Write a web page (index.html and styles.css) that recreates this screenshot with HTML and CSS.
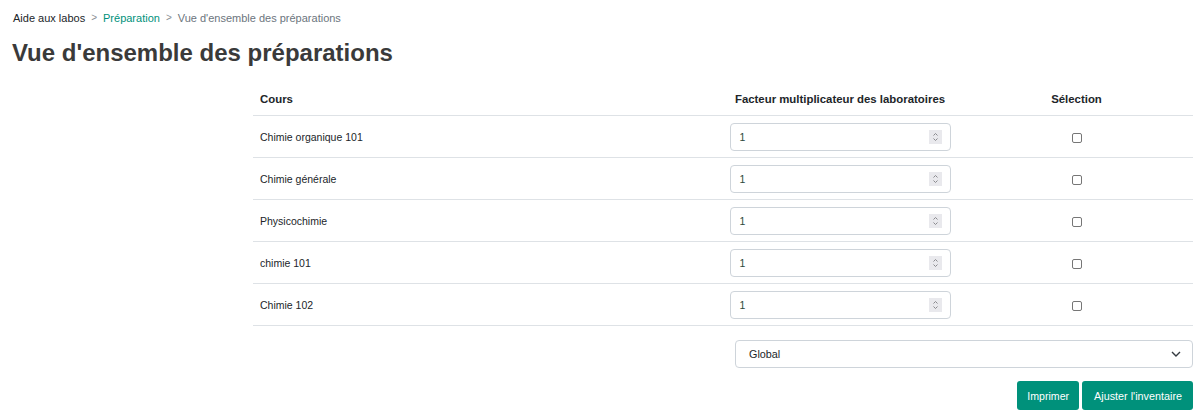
FILE: index.html
```html
<!DOCTYPE html>
<html lang="fr">
<head>
<meta charset="utf-8">
<title>Vue d'ensemble des préparations</title>
<link rel="stylesheet" href="styles.css">
</head>
<body>
<div class="page">
  <nav class="breadcrumb">
    <span class="crumb crumb-root">Aide aux labos</span>
    <span class="sep">&gt;</span>
    <span class="crumb crumb-link">Préparation</span>
    <span class="sep">&gt;</span>
    <span class="crumb crumb-current">Vue d'ensemble des préparations</span>
  </nav>
  <h1 class="title">Vue d'ensemble des préparations</h1>

  <div class="content">
    <table class="prep-table">
      <thead>
        <tr>
          <th class="col-cours">Cours</th>
          <th class="col-factor">Facteur multiplicateur des laboratoires</th>
          <th class="col-select">Sélection</th>
        </tr>
      </thead>
      <tbody>
        <tr>
          <td class="col-cours">Chimie organique 101</td>
          <td class="col-factor"><div class="num-input"><span class="num-value">1</span><svg class="spinner" viewBox="0 0 13 14" width="13" height="14"><rect width="13" height="14" fill="#e9e9ed"/><path d="M4.5 5.5 L6.5 3.5 L8.5 5.5 M4.5 8.5 L6.5 10.5 L8.5 8.5" fill="none" stroke="#8a8a8e" stroke-width="1"/></svg></div></td>
          <td class="col-select"><span class="checkbox"></span></td>
        </tr>
        <tr>
          <td class="col-cours">Chimie générale</td>
          <td class="col-factor"><div class="num-input"><span class="num-value">1</span><svg class="spinner" viewBox="0 0 13 14" width="13" height="14"><rect width="13" height="14" fill="#e9e9ed"/><path d="M4.5 5.5 L6.5 3.5 L8.5 5.5 M4.5 8.5 L6.5 10.5 L8.5 8.5" fill="none" stroke="#8a8a8e" stroke-width="1"/></svg></div></td>
          <td class="col-select"><span class="checkbox"></span></td>
        </tr>
        <tr>
          <td class="col-cours">Physicochimie</td>
          <td class="col-factor"><div class="num-input"><span class="num-value">1</span><svg class="spinner" viewBox="0 0 13 14" width="13" height="14"><rect width="13" height="14" fill="#e9e9ed"/><path d="M4.5 5.5 L6.5 3.5 L8.5 5.5 M4.5 8.5 L6.5 10.5 L8.5 8.5" fill="none" stroke="#8a8a8e" stroke-width="1"/></svg></div></td>
          <td class="col-select"><span class="checkbox"></span></td>
        </tr>
        <tr>
          <td class="col-cours">chimie 101</td>
          <td class="col-factor"><div class="num-input"><span class="num-value">1</span><svg class="spinner" viewBox="0 0 13 14" width="13" height="14"><rect width="13" height="14" fill="#e9e9ed"/><path d="M4.5 5.5 L6.5 3.5 L8.5 5.5 M4.5 8.5 L6.5 10.5 L8.5 8.5" fill="none" stroke="#8a8a8e" stroke-width="1"/></svg></div></td>
          <td class="col-select"><span class="checkbox"></span></td>
        </tr>
        <tr>
          <td class="col-cours">Chimie 102</td>
          <td class="col-factor"><div class="num-input"><span class="num-value">1</span><svg class="spinner" viewBox="0 0 13 14" width="13" height="14"><rect width="13" height="14" fill="#e9e9ed"/><path d="M4.5 5.5 L6.5 3.5 L8.5 5.5 M4.5 8.5 L6.5 10.5 L8.5 8.5" fill="none" stroke="#8a8a8e" stroke-width="1"/></svg></div></td>
          <td class="col-select"><span class="checkbox"></span></td>
        </tr>
      </tbody>
    </table>

    <div class="select-box">
      <span class="select-value">Global</span>
      <svg class="chevron" viewBox="0 0 10 6" width="10" height="6"><path d="M1 1 L5 5 L9 1" fill="none" stroke="#343a40" stroke-width="1.4"/></svg>
    </div>

    <div class="actions">
      <button class="btn">Imprimer</button>
      <button class="btn btn-wide">Ajuster l'inventaire</button>
    </div>
  </div>
</div>
</body>
</html>
```
FILE: styles.css
```css
* { box-sizing: border-box; }

body {
  margin: 0;
  background: #ffffff;
  font-family: "Liberation Sans", Arial, sans-serif;
  color: #212529;
}

.page {
  padding: 10px 11px 0 12px;
}

.breadcrumb {
  display: flex;
  align-items: center;
  font-size: 11px;
  line-height: 16px;
  padding-left: 1px;
}

.sep {
  color: #8a8f94;
  margin: 0 6px;
  font-size: 10px;
}

.crumb-root { color: #212529; }
.crumb-link { color: #00917b; }
.crumb-current { color: #6c757d; }

.title {
  margin: 12px 0 0 0;
  font-size: 24px;
  line-height: 29px;
  font-weight: bold;
  color: #3a3a3a;
}

.content {
  margin-left: 241px;
  margin-top: 17px;
  display: flex;
  flex-direction: column;
}

.prep-table {
  width: 940px;
  border-collapse: collapse;
  table-layout: fixed;
}

.prep-table th {
  font-size: 11.4px;
  font-weight: bold;
  line-height: 15px;
  padding: 8px 7px;
  border-bottom: 1px solid #dee2e6;
  color: #212529;
}

.prep-table td {
  font-size: 10.5px;
  line-height: 15px;
  padding: 7px 7px 6px 7px;
  border-bottom: 1px solid #dee2e6;
  color: #212529;
  vertical-align: middle;
}

.col-cours { width: 467px; text-align: left; }
.col-factor { width: 240px; text-align: center; }
.col-select { width: 233px; text-align: center; }

.prep-table td.col-factor { padding-left: 0; padding-right: 0; }

.num-input {
  width: 221px;
  height: 28px;
  margin: 0 auto;
  border: 1px solid #ced4da;
  border-radius: 4px;
  display: flex;
  align-items: center;
  justify-content: space-between;
  padding: 0 8px 0 9px;
  text-align: left;
}

.num-value {
  font-size: 10.5px;
  color: #2b4a3a;
}

.spinner { display: block; }

.checkbox {
  display: inline-block;
  width: 10px;
  height: 10px;
  border: 1px solid #767676;
  border-radius: 2px;
  vertical-align: middle;
}

.select-box {
  align-self: flex-end;
  width: 458px;
  height: 28px;
  margin-top: 14px;
  border: 1px solid #ced4da;
  border-radius: 4px;
  display: flex;
  align-items: center;
  justify-content: space-between;
  padding: 0 11px 0 13px;
  font-size: 10.8px;
  color: #212529;
}

.chevron { display: block; }

.actions {
  align-self: flex-end;
  display: flex;
  gap: 3px;
  margin-top: 13px;
}

.btn {
  height: 29px;
  border: none;
  border-radius: 3px;
  background: #00917b;
  color: #ffffff;
  font-family: "Liberation Sans", Arial, sans-serif;
  font-size: 10.6px;
  padding: 0 10px;
  cursor: pointer;
}

.btn-wide {
  padding: 0 11px 0 12px;
  font-size: 10.8px;
}
```
